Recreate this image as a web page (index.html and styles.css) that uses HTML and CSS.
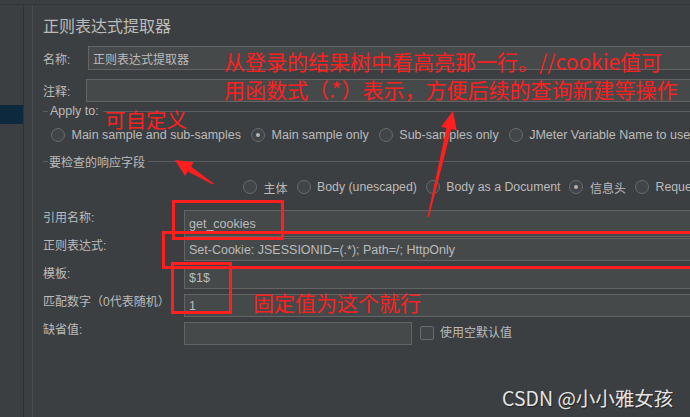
FILE: index.html
```html
<!DOCTYPE html>
<html lang="zh">
<head>
<meta charset="utf-8">
<title>正则表达式提取器</title>
<link rel="stylesheet" href="styles.css">
</head>
<body>
<div class="app">
  <div class="topbar"></div>
  <div class="content">
    <aside class="tree"><div class="tree-sel"></div></aside>
    <div class="split"></div>
    <main class="main">
      <div class="title">正则表达式提取器</div>
      <div class="row name-row">
        <span class="lbl lbl-name">名称:</span>
        <div class="input"><span class="val">正则表达式提取器</span></div>
      </div>
      <div class="row comment-row">
        <span class="lbl lbl-comment">注释:</span>
        <div class="input"></div>
      </div>
      <div class="legend">
        <span class="tick"></span><span class="legend-text en">Apply to:</span><span class="rule"></span>
      </div>
      <div class="radios radios-apply en">
        <span class="ritem"><span class="radio"></span>Main sample and sub-samples</span>
        <span class="ritem"><span class="radio on"></span>Main sample only</span>
        <span class="ritem"><span class="radio"></span>Sub-samples only</span>
        <span class="ritem"><span class="radio"></span>JMeter Variable Name to use</span>
      </div>
      <div class="legend legend2">
        <span class="tick"></span><span class="legend-text">要检查的响应字段</span><span class="rule"></span>
      </div>
      <div class="radios radios-field">
        <span class="ritem"><span class="radio"></span>主体</span>
        <span class="ritem en"><span class="radio"></span>Body (unescaped)</span>
        <span class="ritem en"><span class="radio"></span>Body as a Document</span>
        <span class="ritem"><span class="radio on"></span>信息头</span>
        <span class="ritem en"><span class="radio"></span>Request Headers</span>
      </div>
      <div class="form">
        <div class="frow">
          <span class="flbl">引用名称:</span>
          <div class="input finput finput-tall"><span class="val en">get_cookies</span></div>
        </div>
        <div class="frow">
          <span class="flbl">正则表达式:</span>
          <div class="input finput"><span class="val en">Set-Cookie: JSESSIONID=(.*); Path=/; HttpOnly</span></div>
        </div>
        <div class="frow">
          <span class="flbl">模板:</span>
          <div class="input finput"><span class="val en">$1$</span></div>
        </div>
        <div class="frow">
          <span class="flbl">匹配数字（0代表随机）</span>
          <div class="input finput"><span class="val en">1</span></div>
        </div>
        <div class="frow">
          <span class="flbl">缺省值:</span>
          <div class="input finput finput-short"></div>
          <span class="check"></span>
          <span class="check-text">使用空默认值</span>
        </div>
      </div>
    </main>
  </div>

  <div class="note note-main">从登录的结果树中看高亮那一行。//cookie值可<br>用函数式（.*）表示，方便后续的查询新建等操作</div>
  <div class="note note-custom">可自定义</div>
  <div class="note note-fixed">固定值为这个就行</div>
  <div class="mark mark-1"></div>
  <div class="mark mark-2"></div>
  <div class="mark mark-3"></div>
  <svg class="arrows" width="690" height="417" viewBox="0 0 690 417" aria-hidden="true">
    <polygon points="453,111 456.7,130.3 451.3,129.1 429,217 427.5,216.8 446.5,128 441.1,126.7" fill="#ff1f1f"/>
    <polygon points="175,160 193.7,162.3 191,166.6 213.5,183.6 212.8,184.6 187.8,171.6 185.1,175.9" fill="#ff1f1f"/>
  </svg>
  <div class="watermark">CSDN @小小雅女孩</div>
</div>
</body>
</html>
```

FILE: styles.css
```css
* {
  box-sizing: border-box;
  margin: 0;
  padding: 0;
}

html,
body {
  width: 690px;
  height: 417px;
  overflow: hidden;
}

body {
  background: #3c3f41;
  color: #bbbbbb;
  font-family: "Liberation Sans", "Noto Sans CJK SC", sans-serif;
  font-size: 12px;
}

.app {
  position: relative;
  display: flex;
  flex-direction: column;
  width: 690px;
  height: 417px;
}

.topbar {
  flex: none;
  height: 5px;
  border-bottom: 1px solid #323537;
}

.content {
  flex: 1;
  display: flex;
  min-height: 0;
}

.tree {
  flex: none;
  width: 24px;
  padding-top: 100px;
  border-right: 1px solid #2f3234;
}

.tree-sel {
  height: 19px;
  background: #0d293e;
}

.split {
  flex: none;
  width: 9px;
  border-right: 1px solid #4b4e51;
}

.main {
  flex: 1;
  min-width: 0;
  margin-right: -30px;
  padding-left: 10px;
  display: flex;
  flex-direction: column;
}

.en {
  font-size: 12.5px;
}

.title {
  margin-top: 12px;
  height: 20px;
  font-size: 16px;
  line-height: 20px;
}

.row {
  display: flex;
  align-items: center;
}

.name-row {
  margin-top: 9px;
  height: 24px;
}

.comment-row {
  margin-top: 9px;
  height: 23px;
}

.lbl-name {
  flex: none;
  width: 45px;
}

.lbl-comment {
  flex: none;
  width: 43px;
}

.input {
  flex: 1;
  align-self: stretch;
  display: flex;
  align-items: center;
  padding-left: 4px;
  background: #45494a;
  border: 1px solid #646464;
  white-space: nowrap;
  color: #bbbbbb;
}

.legend {
  display: flex;
  align-items: center;
  height: 16px;
  margin-top: 1px;
}

.tick {
  flex: none;
  width: 5px;
  height: 1px;
  background: #5b5e60;
}

.legend-text {
  margin: 0 4px 0 2px;
  white-space: nowrap;
}

.legend2 {
  margin-top: 8px;
}

.legend2 .legend-text {
  margin: 0 3px 0 1px;
}

.rule {
  flex: 1;
  height: 1px;
  background: #5b5e60;
}

.radios {
  display: flex;
  align-items: center;
  height: 20px;
  gap: 10px;
  white-space: nowrap;
}

.radios-apply {
  margin-top: 6px;
  padding-left: 8px;
}

.radios-field {
  margin-top: 8px;
  padding-left: 200px;
  gap: 9px;
}

.radios-field .en {
  font-size: 12.3px;
}

.ritem {
  display: flex;
  align-items: center;
  gap: 6.5px;
}

.radio {
  flex: none;
  width: 14px;
  height: 14px;
  border-radius: 50%;
  border: 1px solid #686b6d;
  background: #424547;
  display: flex;
  align-items: center;
  justify-content: center;
}

.radio.on::after {
  content: "";
  width: 4px;
  height: 4px;
  border-radius: 50%;
  background: #b4b4b4;
}

.form {
  margin-top: 13px;
  display: flex;
  flex-direction: column;
}

.frow {
  display: flex;
  align-items: flex-start;
  height: 28px;
}

.flbl {
  flex: none;
  width: 141px;
  line-height: 16px;
  white-space: nowrap;
}

.finput {
  align-self: flex-start;
  height: 23px;
}

.finput-tall {
  height: 27px;
}

.finput-short {
  flex: none;
  width: 228px;
}

.check {
  flex: none;
  width: 14px;
  height: 14px;
  margin: 4px 0 0 8px;
  border: 1px solid #686b6d;
  border-radius: 2px;
  background: #424547;
}

.check-text {
  margin-left: 6px;
  line-height: 22px;
  white-space: nowrap;
}

/* annotations laid over the screenshot */
.note {
  position: absolute;
  color: #ff1f1f;
  font-family: "Noto Sans CJK SC", sans-serif;
  white-space: nowrap;
}

.note-main {
  left: 224px;
  top: 47px;
  font-size: 21px;
  line-height: 28px;
}

.note-custom {
  left: 105px;
  top: 105px;
  font-size: 20.5px;
  line-height: 28px;
}

.note-fixed {
  left: 253px;
  top: 288px;
  font-size: 21px;
  line-height: 28px;
}

.mark {
  position: absolute;
  border: 3px solid #ff1f1f;
}

.mark-1 {
  left: 172px;
  top: 200px;
  width: 112px;
  height: 40px;
}

.mark-2 {
  left: 162px;
  top: 231px;
  width: 600px;
  height: 38px;
}

.mark-3 {
  left: 171px;
  top: 262px;
  width: 61px;
  height: 52px;
}

.arrows {
  position: absolute;
  left: 0;
  top: 0;
  pointer-events: none;
}

.watermark {
  position: absolute;
  left: 502px;
  top: 385px;
  font-family: "Noto Sans CJK SC", sans-serif;
  font-size: 19.5px;
  line-height: 25px;
  color: #e4e4e4;
  text-shadow: 1px 1px 1px rgba(0, 0, 0, 0.45);
  white-space: nowrap;
}
```
